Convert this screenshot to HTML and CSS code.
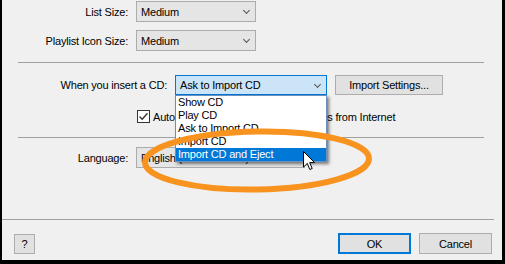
FILE: index.html
```html
<!DOCTYPE html>
<html lang="en">
<head>
    <meta charset="UTF-8">
    <title>Preferences</title>
    <link rel="stylesheet" href="styles.css">
</head>
<body>
    <div class="window">
        <div class="row first">
            <span class="label">List Size:</span>
            <div class="combo w-size"><span>Medium</span><i class="chev"></i></div>
        </div>
        <div class="row second">
            <span class="label">Playlist Icon Size:</span>
            <div class="combo w-size"><span>Medium</span><i class="chev"></i></div>
        </div>

        <div class="sep"></div>

        <div class="row cd-row">
            <span class="label wide">When you insert a CD:</span>
            <div class="combo open w-cd">
                <span>Ask to Import CD</span><i class="chev"></i>
                <ul class="drop">
                    <li>Show CD</li>
                    <li>Play CD</li>
                    <li>Ask to Import CD</li>
                    <li>Import CD</li>
                    <li class="hot">Import CD and Eject</li>
                </ul>
            </div>
            <button class="btn import">Import Settings...</button>
        </div>
        <div class="check-row">
            <span class="box"><svg width="11" height="11" viewBox="0 0 11 11"><path d="M1.5 5.5 L4.2 8.3 L9.5 2.2" fill="none" stroke="#333" stroke-width="1.3"/></svg></span>
            <span>Automatically retrieve CD track names from Internet</span>
        </div>

        <div class="sep second-sep"></div>

        <div class="row lang-row">
            <span class="label">Language:</span>
            <div class="combo w-lang"><span>English (United States)</span><i class="chev"></i></div>
        </div>

        <div class="sep full"></div>

        <div class="footer">
            <button class="btn help">?</button>
            <div class="actions">
                <button class="btn ok">OK</button>
                <button class="btn">Cancel</button>
            </div>
        </div>

        <svg class="ring" width="500" height="260" viewBox="0 0 500 260">
            <ellipse cx="255" cy="160.5" rx="112" ry="29" fill="none" stroke="#f7931e" stroke-width="6" transform="rotate(-1 255 160.5)"/>
        </svg>
        <svg class="cursor" width="13" height="20" viewBox="0 0 13 20">
            <path d="M0.5 0.5 L0.5 16 L4.3 12.4 L6.8 18.5 L9.2 17.5 L6.7 11.6 L11.6 11.6 Z" fill="#fff" stroke="#000" stroke-width="1"/>
        </svg>
    </div>
</body>
</html>
```

FILE: styles.css
```css
body {
    margin: 0;
    padding: 0 3px 4px 2px;
    background-color: #000;
    font-family: "Liberation Sans", Arial, sans-serif;
    font-size: 11px;
    letter-spacing: -0.2px;
    color: #000;
}
.window {
    position: relative;
    width: 500px;
    height: 260px;
    background-color: #f0f0f0;
    overflow: hidden;
}
.row {
    display: flex;
    align-items: center;
    gap: 8px;
}
.row.first {
    padding-top: 1px;
}
.row.second {
    margin-top: 8px;
}
.label {
    width: 126px;
    text-align: right;
}
.label.wide {
    width: 165px;
}
.combo {
    position: relative;
    box-sizing: border-box;
    height: 21px;
    display: flex;
    align-items: center;
    padding-left: 4px;
    background-color: #e5e5e5;
    border: 1px solid #acacac;
}
.w-size {
    width: 120px;
}
.w-cd {
    width: 152px;
    height: 20px;
}
.w-lang {
    width: 169px;
    white-space: nowrap;
}
.chev {
    position: absolute;
    right: 6px;
    top: 6px;
    width: 4px;
    height: 4px;
    border-right: 1px solid #555;
    border-bottom: 1px solid #555;
    transform: rotate(45deg);
}
.combo.open {
    background-color: #cce4f7;
    border-color: #0078d7;
}
.drop {
    position: absolute;
    top: 19px;
    left: -1px;
    width: 152px;
    margin: 0;
    padding: 0;
    list-style: none;
    box-sizing: border-box;
    background-color: #fff;
    border: 1px solid #6d8fbd;
    box-shadow: 2px 2px 3px rgba(0, 0, 0, 0.5);
    z-index: 2;
}
.drop li {
    height: 13px;
    line-height: 13px;
    padding-left: 2px;
}
.drop li.hot {
    background-color: #0078d7;
    color: #fff;
}
.sep {
    height: 1px;
    margin: 11px 18px 0 16px;
    background-color: #a0a0a0;
}
.cd-row {
    margin-top: 12px;
}
.btn {
    box-sizing: border-box;
    height: 20px;
    padding: 0;
    font: inherit;
    letter-spacing: inherit;
    color: #000;
    background-color: #e1e1e1;
    border: 1px solid #adadad;
}
.btn.import {
    width: 108px;
}
.check-row {
    display: flex;
    align-items: center;
    gap: 3px;
    height: 13px;
    margin: 15px 0 0 135px;
    white-space: nowrap;
}
.box {
    box-sizing: border-box;
    width: 13px;
    height: 13px;
    display: flex;
    align-items: center;
    justify-content: center;
    background-color: #fff;
    border: 1px solid #333;
}
.second-sep {
    margin-top: 14px;
}
.lang-row {
    margin-top: 9px;
}
.sep.full {
    margin: 51px 8px 0 0;
}
.footer {
    display: flex;
    align-items: center;
    margin: 13px 10px 0 12px;
}
.btn.help {
    width: 21px;
    height: 20px;
}
.actions {
    display: flex;
    gap: 8px;
    margin-left: auto;
}
.actions .btn {
    width: 73px;
    height: 21px;
}
.btn.ok {
    border: 2px solid #0078d7;
}
.ring {
    position: absolute;
    top: 0;
    left: 0;
    z-index: 3;
    pointer-events: none;
}
.cursor {
    position: absolute;
    left: 301px;
    top: 151px;
    z-index: 4;
}
```
